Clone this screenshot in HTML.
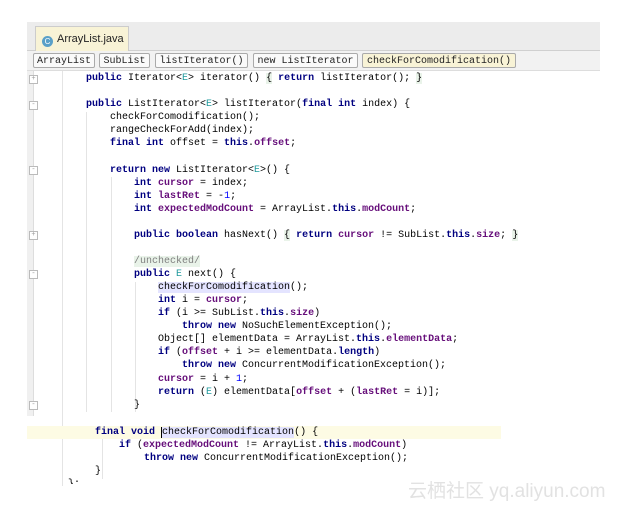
<!DOCTYPE html>
<html><head><meta charset="utf-8"><style>
body{margin:0;width:622px;height:507px;background:#fff;position:relative;overflow:hidden;font-family:"Liberation Mono",monospace;}
.tabbar{position:absolute;left:27px;top:22px;width:573px;height:28px;background:#ececec;border-bottom:1px solid #d0d0d0;}
.tab{position:absolute;left:8px;top:4px;width:92px;height:24px;background:#f8f3d6;border:1px solid #ccc;border-bottom:none;font:11px "Liberation Sans",sans-serif;line-height:24px;color:#222;}
.crumbs{position:absolute;left:27px;top:51px;width:573px;height:19px;background:#f2f2f2;border-bottom:1px solid #ddd;}
.cb{position:absolute;top:2px;height:15px;border:1px solid #aaa;border-radius:2px;background:#fafafa;font-size:10px;line-height:15px;text-align:center;color:#222;white-space:nowrap;box-sizing:border-box;}
.gut{position:absolute;left:27px;top:71px;width:6px;height:345px;background:#f0f0f0;border-right:1px solid #ddd;}
.guide{position:absolute;width:1px;background:#e4e4e4;}
.ln{position:absolute;height:13px;font-size:10px;line-height:13px;white-space:pre;color:#000;}
.k{color:#000080;font-weight:bold}.f{color:#660e7a;font-weight:bold}.n{color:#0000ff}.t{color:#20999d}
.hl{background:#e4e4ff}.fb{background:#e9f3e9}
.fold{position:absolute;left:29px;width:7px;height:7px;border:1px solid #bbb;background:#fff;font-size:7px;line-height:7px;text-align:center;color:#999}
</style></head><body>
<div class="tabbar"><div class="tab"><span style="display:inline-block;width:11px;height:11px;border-radius:6px;background:#5aa0c8;margin:0 4px 0 6px;vertical-align:-2px;font-size:8px;color:#fff;text-align:center;line-height:11px">C</span>ArrayList.java <span style="color:#888;font-size:10px">×</span></div></div>
<div class="crumbs">
<div class="cb" style="left:6px;width:62px">ArrayList</div>
<div class="cb" style="left:72px;width:51px">SubList</div>
<div class="cb" style="left:128px;width:93px">listIterator()</div>
<div class="cb" style="left:226px;width:105px">new ListIterator</div>
<div class="cb" style="left:335px;width:154px;background:#f8f3d6">checkForComodification()</div>
</div>
<div class="gut"></div>
<div class="guide" style="left:62px;top:71px;height:415px"></div>
<div class="guide" style="left:86px;top:112px;height:300px"></div>
<div class="guide" style="left:111px;top:177px;height:235px"></div>
<div class="guide" style="left:135px;top:282px;height:130px"></div>
<div class="guide" style="left:102px;top:439px;height:40px"></div>
<div class="fold" style="top:75px">+</div>
<div class="fold" style="top:101px">-</div>
<div class="fold" style="top:166px">-</div>
<div class="fold" style="top:231px">+</div>
<div class="fold" style="top:270px">-</div>
<div class="fold" style="top:401px">-</div>
<div style="position:absolute;left:27px;top:426px;width:474px;height:13px;background:#fdfbe4"></div>
<div class="ln" style="left:86px;top:72px"><span class="k">public</span> Iterator&lt;<span class="t">E</span>&gt; iterator() <span class="fb">{</span> <span class="k">return</span> listIterator(); <span class="fb">}</span></div>
<div class="ln" style="left:86px;top:98px"><span class="k">public</span> ListIterator&lt;<span class="t">E</span>&gt; listIterator(<span class="k">final int</span> index) {</div>
<div class="ln" style="left:110px;top:111px">checkForComodification();</div>
<div class="ln" style="left:110px;top:124px">rangeCheckForAdd(index);</div>
<div class="ln" style="left:110px;top:137px"><span class="k">final int</span> offset = <span class="k">this</span>.<span class="f">offset</span>;</div>
<div class="ln" style="left:110px;top:164px"><span class="k">return new</span> ListIterator&lt;<span class="t">E</span>&gt;() {</div>
<div class="ln" style="left:134px;top:177px"><span class="k">int</span> <span class="f">cursor</span> = index;</div>
<div class="ln" style="left:134px;top:190px"><span class="k">int</span> <span class="f">lastRet</span> = -<span class="n">1</span>;</div>
<div class="ln" style="left:134px;top:203px"><span class="k">int</span> <span class="f">expectedModCount</span> = ArrayList.<span class="k">this</span>.<span class="f">modCount</span>;</div>
<div class="ln" style="left:134px;top:229px"><span class="k">public boolean</span> hasNext() <span class="fb">{</span> <span class="k">return</span> <span class="f">cursor</span> != SubList.<span class="k">this</span>.<span class="f">size</span>; <span class="fb">}</span></div>
<div class="ln" style="left:134px;top:255px"><span class="fb" style="color:#808080">/unchecked/</span></div>
<div class="ln" style="left:134px;top:268px"><span class="k">public</span> <span class="t">E</span> next() {</div>
<div class="ln" style="left:158px;top:281px"><span class="hl">checkForComodification</span>();</div>
<div class="ln" style="left:158px;top:294px"><span class="k">int</span> i = <span class="f">cursor</span>;</div>
<div class="ln" style="left:158px;top:307px"><span class="k">if</span> (i &gt;= SubList.<span class="k">this</span>.<span class="f">size</span>)</div>
<div class="ln" style="left:182px;top:320px"><span class="k">throw new</span> NoSuchElementException();</div>
<div class="ln" style="left:158px;top:333px">Object[] elementData = ArrayList.<span class="k">this</span>.<span class="f">elementData</span>;</div>
<div class="ln" style="left:158px;top:346px"><span class="k">if</span> (<span class="f">offset</span> + i &gt;= elementData.<span class="k">length</span>)</div>
<div class="ln" style="left:182px;top:359px"><span class="k">throw new</span> ConcurrentModificationException();</div>
<div class="ln" style="left:158px;top:373px"><span class="f">cursor</span> = i + <span class="n">1</span>;</div>
<div class="ln" style="left:158px;top:386px"><span class="k">return</span> (<span class="t">E</span>) elementData[<span class="f">offset</span> + (<span class="f">lastRet</span> = i)];</div>
<div class="ln" style="left:134px;top:399px">}</div>
<div class="ln" style="left:95px;top:426px"><span class="k">final void</span> <span class="hl" style="border-left:1px solid #000">checkForComodification</span>() {</div>
<div class="ln" style="left:119px;top:439px"><span class="k">if</span> (<span class="f">expectedModCount</span> != ArrayList.<span class="k">this</span>.<span class="f">modCount</span>)</div>
<div class="ln" style="left:144px;top:452px"><span class="k">throw new</span> ConcurrentModificationException();</div>
<div class="ln" style="left:95px;top:465px">}</div>
<div class="ln" style="left:68px;top:478px;height:6px;overflow:hidden">};</div>
<div style="position:absolute;left:408px;top:476px;font:19px 'Liberation Sans','Noto Sans CJK SC',sans-serif;color:#e2e2e2;white-space:nowrap">云栖社区 yq.aliyun.com</div>
</body></html>
